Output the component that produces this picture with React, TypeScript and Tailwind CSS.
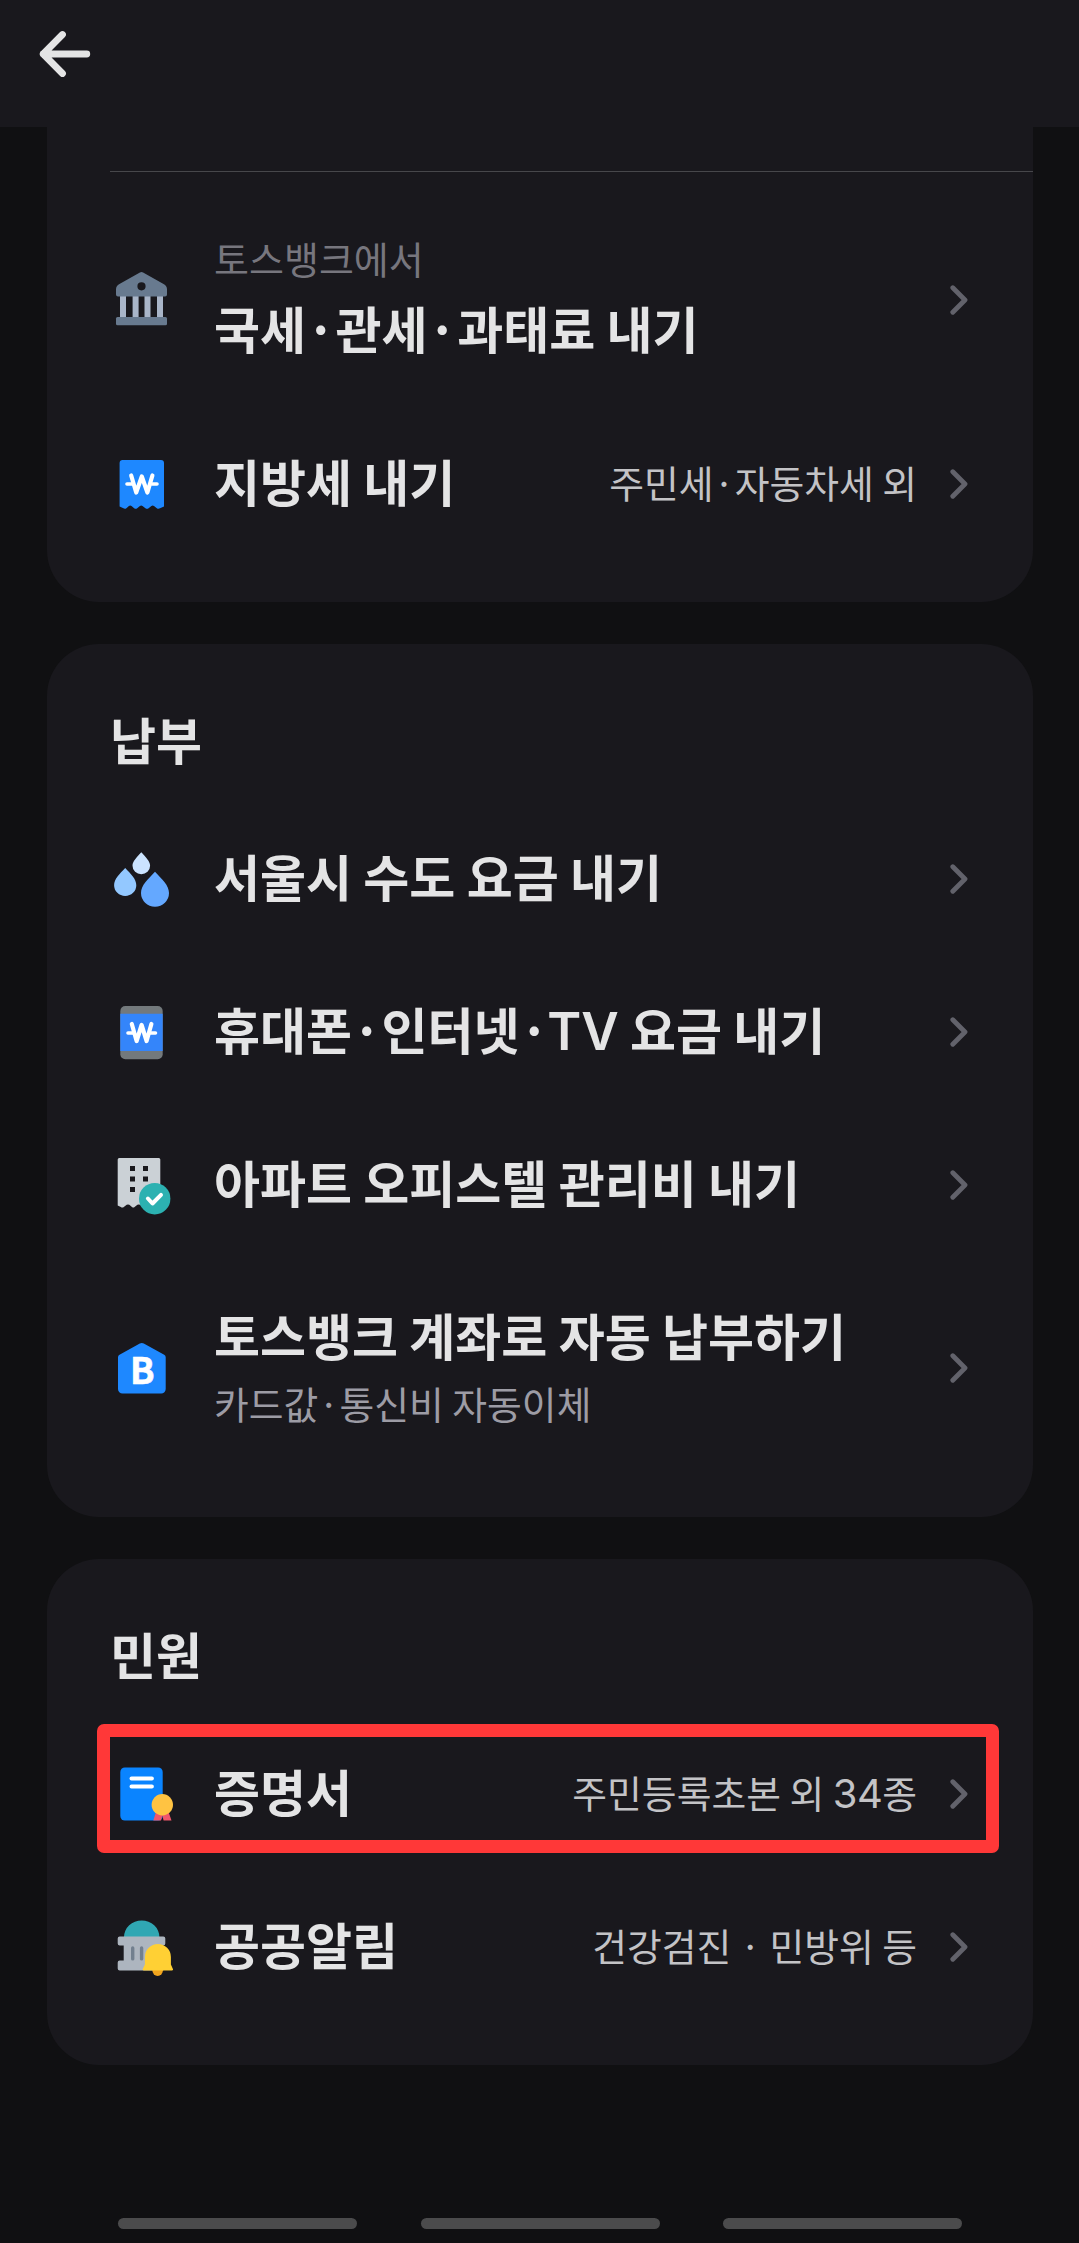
import type { ReactNode } from 'react';

interface RowProps {
  icon: ReactNode;
  title: ReactNode;
  overline?: string;
  caption?: string;
  value?: ReactNode;
  highlighted?: boolean;
}

const ICON = 'h-16 w-16 shrink-0 overflow-visible';

function BankIcon() {
  return (
    <svg className={ICON} viewBox="0 0 64 64">
      <path d="M10 28h6v22h-6zM22.6 28h6v22h-6zM34.5 28h6v22h-6zM47 28h6v22h-6z" fill="#a9b5c8" />
      <path
        fillRule="evenodd"
        d="M29.9 4.5a3 3 0 0 1 3.2 0L54 16.2a6 6 0 0 1 3 5.2v5a2 2 0 0 1-2 2H8a2 2 0 0 1-2-2v-5a6 6 0 0 1 3-5.2zM31.5 14.2a4.1 4.1 0 1 0 0 8.2 4.1 4.1 0 0 0 0-8.2z"
        fill="#687a8f"
      />
      <rect x="6" y="49" width="51" height="8.2" rx="1.5" fill="#687a8f" />
    </svg>
  );
}

function BillIcon() {
  return (
    <svg className={ICON} viewBox="0 0 64 64">
      <path
        d="M12.6 8H51a3 3 0 0 1 3 3V54.5L50 56.3Q48.4 57.3 46.8 56.2L44 54Q42.7 53.1 41.4 54L38.6 56.2Q37 57.3 35.4 56.2L32.5 54Q31.2 53.1 29.9 54L27.2 56.2Q25.7 57.3 24.2 56.2L21.5 54Q20.2 53.1 18.9 54L16.4 56.2Q14.9 57.3 13.4 56.3L9.6 54.5V11A3 3 0 0 1 12.6 8Z"
        fill="#1e88ff"
      />
      <g fill="none" stroke="#fff" strokeLinecap="round" strokeLinejoin="round">
        <path d="M21.2 23.5l5 17 5.6-16 5.6 16 5-17" strokeWidth="4.2" />
        <path d="M17 32h5M42 32h5" strokeWidth="3.6" />
      </g>
    </svg>
  );
}

function WaterIcon() {
  return (
    <svg className={ICON} viewBox="0 0 64 64">
      <path d="M31.3 5.3c4.4 5 8.8 8.9 8.8 13.5a8.8 8.4 0 0 1-17.6 0c0-4.6 4.4-8.5 8.8-13.5z" fill="#cbe3ff" />
      <path d="M15.2 21c5.6 6 11.1 11 11.1 17.2a11.1 10.8 0 0 1-22.2 0c0-6.2 5.5-11.2 11.1-17.2z" fill="#93c8ff" />
      <path d="M45 24.8c7 7.5 14 13.5 14 21.3a14 13.6 0 0 1-28 0c0-7.8 7-13.8 14-21.3z" fill="#64a8ff" />
    </svg>
  );
}

function PhoneBillIcon() {
  return (
    <svg className={ICON} viewBox="0 0 64 64">
      <rect x="10.3" y="6" width="42.4" height="53.3" rx="5" fill="#73797c" />
      <path d="M10.3 13.7h42.4v37.4H10.3z" fill="#3485fa" />
      <g fill="none" stroke="#fff" strokeLinecap="round" strokeLinejoin="round">
        <path d="M21.8 24l4.8 17 5-16 5 16 4.8-17" strokeWidth="4.2" />
        <path d="M18 33h5M40.5 33h5" strokeWidth="3.6" />
      </g>
    </svg>
  );
}

function ApartmentIcon() {
  return (
    <svg className={ICON} viewBox="0 0 64 64">
      <path
        fillRule="evenodd"
        d="M9.2 5h39.6a1.5 1.5 0 0 1 1.5 1.5V54H33L30 51.8Q28.7 51 27.4 51.8L24.6 54Q23.3 55 22 54L19.3 51.8Q18 51 16.7 51.8L13.8 54Q12.3 55 10.8 54L7.7 52.5V6.5A1.5 1.5 0 0 1 9.2 5zM20 13v5h5v-5zM33 13v5h5v-5zM20 23.4v5h5v-5zM33 23.4v5h5v-5zM20 34v5h5v-5z"
        fill="#cbd1d6"
      />
      <circle cx="44.7" cy="45.7" r="15.7" fill="#2cb1b1" />
      <path d="M37.9 45.5l4.6 5 8.5-8.6" fill="none" stroke="#fff" strokeWidth="4" strokeLinecap="round" strokeLinejoin="round" />
    </svg>
  );
}

function BankHomeIcon() {
  return (
    <svg className={ICON} viewBox="0 0 64 64">
      <path
        d="M29.8 7.6a4 4 0 0 1 4 0L54.2 18.7a3 3 0 0 1 1.5 2.6V53a4.5 4.5 0 0 1-4.5 4.5H12.5A4.5 4.5 0 0 1 8 53V21.3a3 3 0 0 1 1.5-2.6z"
        fill="#1e88ff"
      />
      <text x="32.2" y="48.3" textAnchor="middle" className="fill-white stroke-white font-['Noto_Sans_CJK_KR'] text-[36px] font-bold [stroke-width:0.6px]">
        B
      </text>
    </svg>
  );
}

function CertificateIcon() {
  return (
    <svg className={ICON} viewBox="0 0 64 64">
      <rect x="10.3" y="5.5" width="42.4" height="53" rx="4.5" fill="#0a84ff" />
      <path d="M21.5 16.5h20.4M21.5 24.5h20.4" stroke="#fff" strokeWidth="4" strokeLinecap="round" />
      <path d="M46 50l-2.7 8.5H51l1.3-5 1.3 5h7.9L58.6 50z" fill="#f0566b" />
      <circle cx="52.3" cy="42.8" r="10.7" fill="#ffc342" />
    </svg>
  );
}

function PublicNoticeIcon() {
  return (
    <svg className={ICON} viewBox="0 0 64 64">
      <path d="M14 22a17.7 16.5 0 0 1 35.4 0z" fill="#30a7b3" />
      <path
        d="M9.7 21.5h43.6a2 2 0 0 1 2 2v5a2 2 0 0 1-2 2h-4v15h4v10H9.7a2 2 0 0 1-2-2v-6a2 2 0 0 1 2-2h4v-15h-4a2 2 0 0 1-2-2v-5a2 2 0 0 1 2-2z"
        fill="#adb5bf"
      />
      <path d="M22.7 33v10.9M31.6 33v10.9" stroke="#727f8e" strokeWidth="3.4" strokeLinecap="round" />
      <path d="M42.3 55H53a5.3 6 0 0 1-10.7 0z" fill="#f2a51e" />
      <path d="M34.9 42a13 13 0 0 1 26 0v7.5l2 4.5a1 1 0 0 1-.9 1.5H33.7a1 1 0 0 1-.9-1.5l2.1-4.5z" fill="#ffd034" />
    </svg>
  );
}

function Chevron() {
  return (
    <svg className="ml-[33px] h-[30px] w-[18px] shrink-0" viewBox="0 0 18 30" fill="none" stroke="#62626b" strokeWidth="4.8" strokeLinecap="round" strokeLinejoin="round">
      <path d="M2.8 2.8L15 15 2.8 27.2" />
    </svg>
  );
}

function Row({ icon, title, overline, caption, value, highlighted }: RowProps) {
  const height = overline || caption ? 'h-[214px]' : 'h-[153px]';
  const offset = overline ? 'mb-2.5' : caption ? 'mb-1' : 'mb-2';

  return (
    <li className={`relative flex items-center pr-[65px] pl-[63px] ${height}`}>
      {icon}
      <div className={`ml-10 flex flex-1 flex-col whitespace-nowrap ${offset}`}>
        {overline && <span className="text-[38px] leading-[64px] text-[#77767e]">{overline}</span>}
        <span className="text-[50px] leading-[74px] font-bold text-[#e4e4e5]">{title}</span>
        {caption && <span className="text-[37.8px] leading-[64px] text-[#9d9ca5]">{caption}</span>}
      </div>
      {value && <span className="mb-1 text-[37.8px] leading-[56px] whitespace-nowrap text-[#c3c3c6]">{value}</span>}
      <Chevron />
      {highlighted && <div className="absolute top-[7px] right-[34px] left-[50px] h-[129px] rounded-[7px] border-[13px] border-[#ff3838]" />}
    </li>
  );
}

function Section({ title, children }: { title: string; children: ReactNode }) {
  return (
    <section className="rounded-[52px] bg-[#19181d] pb-[42px]">
      <h2 className="h-[158px] pt-[57px] pl-[63px] text-[50px] leading-[74px] font-bold text-[#e4e4e5]">{title}</h2>
      <ul>{children}</ul>
    </section>
  );
}

export default function App() {
  return (
    <div className="flex h-[2243px] w-[1079px] flex-col overflow-hidden bg-[#101012] font-['Noto_Sans_CJK_KR',sans-serif]">
      <header className="flex h-[127px] shrink-0 items-start bg-[#19181d] pt-[30px] pl-[39px]">
        <svg className="h-12 w-[52px]" viewBox="0 0 52 48" fill="none" stroke="#e4e4e5" strokeWidth="6.8" strokeLinecap="round" strokeLinejoin="round">
          <path d="M23.5 4.5L4.2 24l19.3 19.5M4.2 24h43.6" />
        </svg>
      </header>

      <main className="flex flex-col gap-[42px] pr-[46px] pl-[47px]">
        <section className="rounded-b-[52px] bg-[#19181d] pt-[44px] pb-[42px]">
          <hr className="mb-[21px] ml-[63px] border-t border-[#47474b]" />
          <ul>
            <Row icon={<BankIcon />} overline="토스뱅크에서" title="국세·관세·과태료 내기" />
            <Row icon={<BillIcon />} title="지방세 내기" value="주민세·자동차세 외" />
          </ul>
        </section>

        <Section title="납부">
          <Row icon={<WaterIcon />} title="서울시 수도 요금 내기" />
          <Row
            icon={<PhoneBillIcon />}
            title={
              <>
                휴대폰·인터넷·<span className="-ml-[2px] font-['Inter'] text-[51.5px] leading-none font-semibold">TV</span> 요금 내기
              </>
            }
          />
          <Row icon={<ApartmentIcon />} title="아파트 오피스텔 관리비 내기" />
          <Row icon={<BankHomeIcon />} title="토스뱅크 계좌로 자동 납부하기" caption="카드값·통신비 자동이체" />
        </Section>

        <Section title="민원">
          <Row
            icon={<CertificateIcon />}
            title="증명서"
            value={
              <>
                주민등록초본 외 <span className="font-['Inter'] text-[40px] leading-none tracking-[-0.5px]">34</span>종
              </>
            }
            highlighted
          />
          <Row icon={<PublicNoticeIcon />} title="공공알림" value="건강검진 · 민방위 등" />
        </Section>
      </main>

      <nav className="mt-auto mb-[14px] flex justify-between pr-[117px] pl-[118px]">
        <div className="h-[11px] w-[239px] rounded-full bg-[#4b4b4c]" />
        <div className="h-[11px] w-[239px] rounded-full bg-[#4b4b4c]" />
        <div className="h-[11px] w-[239px] rounded-full bg-[#4b4b4c]" />
      </nav>
    </div>
  );
}
